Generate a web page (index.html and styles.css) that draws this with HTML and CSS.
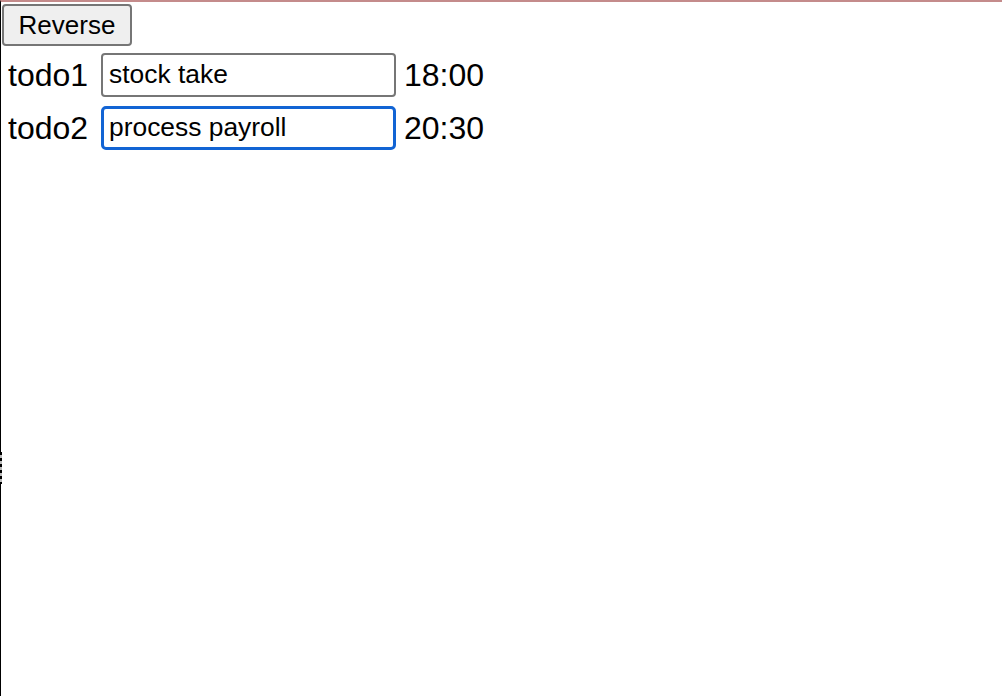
FILE: index.html
```html
<!DOCTYPE html>
<html>
<head>
<meta charset="utf-8">
<link rel="stylesheet" href="styles.css">
</head>
<body>
<div class="page">
  <button class="btn">Reverse</button>
  <div class="row">
    <span class="label">todo1</span>
    <input class="field" type="text" value="stock take">
    <span class="time">18:00</span>
  </div>
  <div class="row">
    <span class="label">todo2</span>
    <input class="field focused" type="text" value="process payroll">
    <span class="time">20:30</span>
  </div>
  <div class="grip"></div>
</div>
</body>
</html>
```
FILE: styles.css
```css
html, body {
  margin: 0;
  padding: 0;
  background: #fff;
}
.page {
  position: relative;
  box-sizing: border-box;
  width: 1002px;
  height: 696px;
  border-top: 2px solid #c48b8b;
  border-left: 1px solid #000;
  padding: 2px 0 0 1px;
  font-family: "Liberation Sans", Arial, sans-serif;
  color: #000;
}
.btn {
  display: block;
  box-sizing: border-box;
  width: 130px;
  height: 42px;
  margin: 0 0 2px 0;
  padding: 0;
  font-family: "Liberation Sans", Arial, sans-serif;
  font-size: 26px;
  color: #000;
  background: #efefef;
  border: 2px solid #767676;
  border-radius: 4px;
}
.row {
  display: flex;
  align-items: center;
  height: 53px;
}
.label {
  font-size: 32px;
  margin-left: 6px;
  width: 83px;
  line-height: 1;
}
.field {
  box-sizing: border-box;
  width: 295px;
  height: 44px;
  margin: 0 0 0 10px;
  padding: 0 6px;
  font-family: "Liberation Sans", Arial, sans-serif;
  font-size: 26.4px;
  color: #000;
  background: #fff;
  border: 2px solid #767676;
  border-radius: 4px;
  outline: none;
}
.field.focused {
  border: 3px solid #1264d4;
  border-radius: 5px;
  padding: 0 5px;
}
.time {
  font-size: 32px;
  margin-left: 8px;
  line-height: 1;
}
.grip {
  position: absolute;
  left: -1px;
  top: 450px;
  width: 2px;
  height: 32px;
  background: repeating-linear-gradient(to bottom, #000 0 3px, #bbb 3px 6px);
}
```
